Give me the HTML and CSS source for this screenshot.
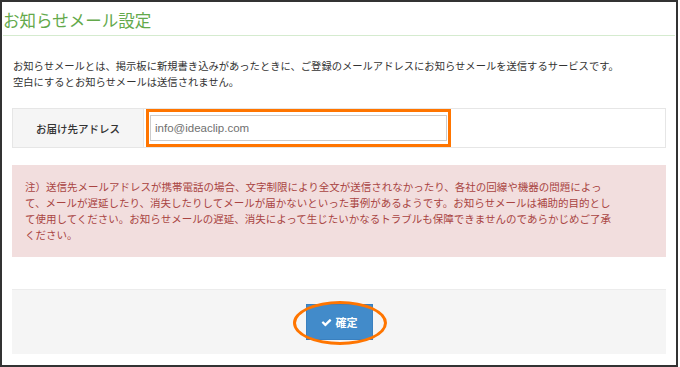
FILE: index.html
```html
<!DOCTYPE html>
<html lang="ja">
<head>
    <meta charset="UTF-8">
    <title>お知らせメール設定</title>
    <link rel="stylesheet" href="styles.css">
</head>
<body>

<div class="frame">
    <h1 class="page-title">お知らせメール設定</h1>

    <div class="page-body">
        <p class="intro">お知らせメールとは、掲示板に新規書き込みがあったときに、ご登録のメールアドレスにお知らせメールを送信するサービスです。<br>空白にするとお知らせメールは送信されません。</p>

        <div class="form-row">
            <div class="form-label">お届け先アドレス</div>
            <div class="form-field">
                <div class="mark-box">
                    <input type="text" class="mail-input" placeholder="info@ideaclip.com">
                </div>
            </div>
        </div>

        <div class="alert">注）送信先メールアドレスが携帯電話の場合、文字制限により全文が送信されなかったり、各社の回線や機器の問題によっ<br>て、メールが遅延したり、消失したりしてメールが届かないといった事例があるようです。お知らせメールは補助的目的とし<br>て使用してください。お知らせメールの遅延、消失によって生じたいかなるトラブルも保障できませんのであらかじめご了承<br>ください。</div>

        <div class="form-actions">
            <span class="mark-ring">
                <button class="btn">
                    <svg class="btn-icon" viewBox="0 0 1792 1792"><path d="M1671 566q0 40-28 68l-724 724-136 136q-28 28-68 28t-68-28l-136-136-362-362q-28-28-28-68t28-68l136-136q28-28 68-28t68 28l294 295 656-657q28-28 68-28t68 28l136 136q28 28 28 68z"/></svg>
                    確定
                </button>
            </span>
        </div>
    </div>
</div>

</body>
</html>
```

FILE: styles.css
```css
body {
    margin: 0;
    background: #fff;
    color: #333;
    font-family: "Noto Sans CJK JP", "Liberation Sans", sans-serif;
}
.frame {
    width: 678px;
    height: 367px;
    box-sizing: border-box;
    border: 2px solid #333;
}
.page-title {
    margin: 0 1px;
    padding: 6px 0 3px;
    font-size: 16.5px;
    line-height: 24px;
    font-weight: normal;
    color: #63a94b;
    border-bottom: 1px solid #d5ebcf;
}
.page-body {
    padding: 0 10px;
}
.intro {
    margin: 22px 0 0 1px;
    font-size: 10.3px;
    line-height: 16px;
}
.form-row {
    display: flex;
    height: 40px;
    box-sizing: border-box;
    margin-top: 18px;
    border: 1px solid #e6e6e6;
}
.form-label {
    width: 130px;
    display: flex;
    align-items: center;
    justify-content: center;
    background: #f5f5f5;
    border-right: 1px solid #e6e6e6;
    font-size: 10.5px;
    font-weight: 500;
    color: #333;
}
.form-field {
    padding: 6px 0 0 6px;
}
.mark-box {
    position: relative;
    width: 297px;
}
/* orange annotation frame */
.mark-box::after {
    content: "";
    position: absolute;
    left: -4px;
    right: -4px;
    top: -6px;
    bottom: -6px;
    border: 3px solid #ff7500;
    pointer-events: none;
}
.mail-input {
    display: block;
    width: 297px;
    height: 26px;
    box-sizing: border-box;
    margin: 0;
    padding: 0 4px;
    border: 1px solid #ccc;
    font-family: "Liberation Sans", Arial, sans-serif;
    font-size: 11.5px;
    color: #666;
}
.mail-input::placeholder {
    color: #707070;
}
.alert {
    margin-top: 17px;
    padding: 14px 13px;
    background: #f2dede;
    color: #a94442;
    font-size: 10.5px;
    line-height: 16px;
}
.form-actions {
    display: flex;
    align-items: center;
    justify-content: center;
    height: 65px;
    box-sizing: border-box;
    margin-top: 32px;
    background: #f5f5f5;
    border-top: 1px solid #ececec;
}
.mark-ring {
    position: relative;
    display: inline-block;
}
.mark-ring::after {
    content: "";
    position: absolute;
    left: -13px;
    right: -14px;
    top: -3px;
    bottom: -5px;
    border: 3px solid #ff7500;
    border-radius: 50%;
    pointer-events: none;
}
.btn {
    display: flex;
    align-items: center;
    gap: 4px;
    height: 36px;
    margin: 0;
    padding: 0 14px;
    background: #428bca;
    border: 1px solid #3a80bf;
    color: #fff;
    font-family: "Noto Sans CJK JP", sans-serif;
    font-size: 11px;
    font-weight: bold;
}
.btn-icon {
    width: 11px;
    height: 11px;
    fill: #fff;
}
```
